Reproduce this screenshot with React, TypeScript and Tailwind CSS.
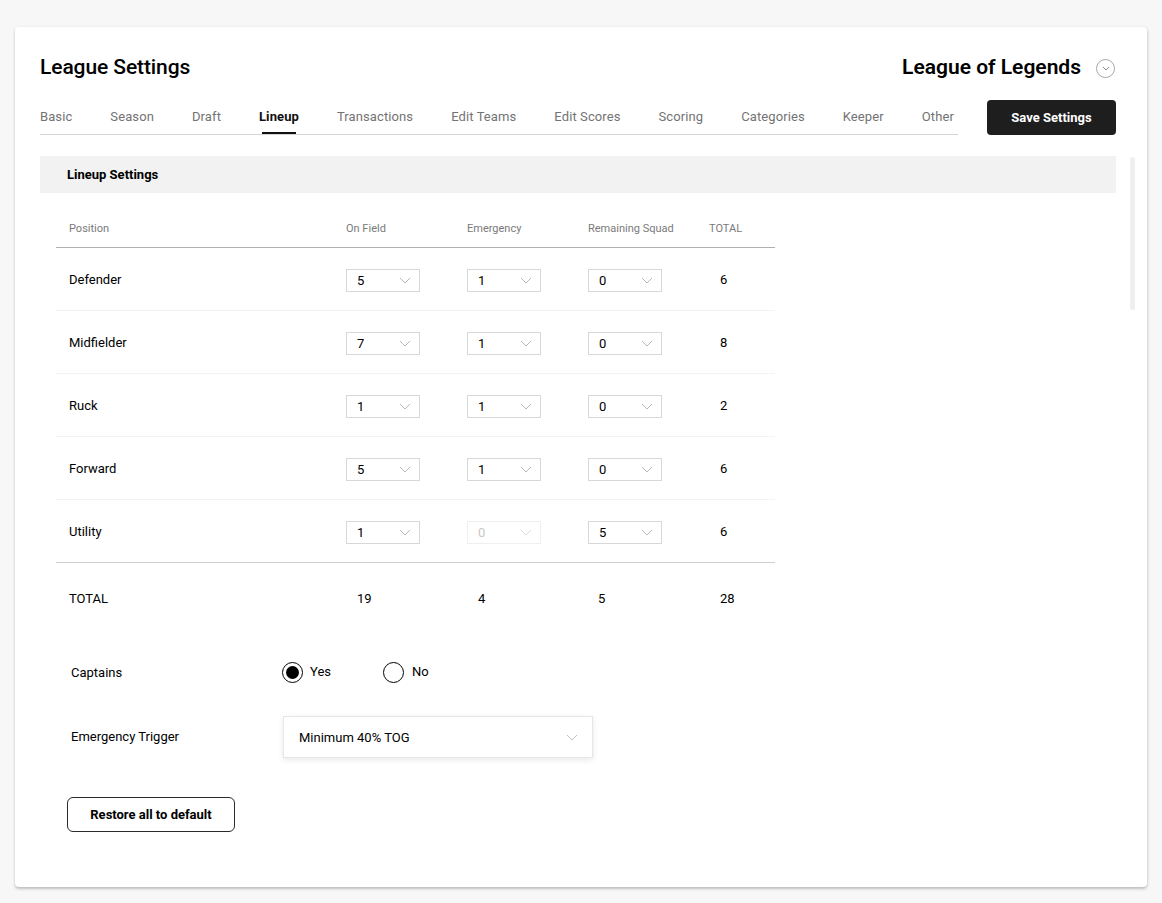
import React from "react";

const Chevron = ({ w = 12, h = 7, color = "#b5b5b5" }: { w?: number; h?: number; color?: string }) => (
  <svg width={w} height={h} viewBox="0 0 12 7" fill="none">
    <path d="M1 1l5 5 5-5" stroke={color} strokeWidth="1" />
  </svg>
);

const Select = ({ value, disabled = false }: { value: string; disabled?: boolean }) => (
  <div
    className={`w-[74px] h-[23px] flex items-center justify-between pl-[10px] pr-[8px] border ${
      disabled ? "border-[#efefef] text-[#c8c8c8]" : "border-[#d8d8d8] text-[#000]"
    }`}
  >
    <span className="text-[13px] leading-none">{value}</span>
    <Chevron color={disabled ? "#dedede" : "#b8b8b8"} />
  </div>
);

const tabs = [
  "Basic",
  "Season",
  "Draft",
  "Lineup",
  "Transactions",
  "Edit Teams",
  "Edit Scores",
  "Scoring",
  "Categories",
  "Keeper",
  "Other",
];

const rows = [
  { name: "Defender", f: "5", e: "1", r: "0", t: "6" },
  { name: "Midfielder", f: "7", e: "1", r: "0", t: "8" },
  { name: "Ruck", f: "1", e: "1", r: "0", t: "2" },
  { name: "Forward", f: "5", e: "1", r: "0", t: "6" },
  { name: "Utility", f: "1", e: "0", r: "5", t: "6", dis: true },
];

export default function App() {
  return (
    <div
      className="min-h-[903px] bg-[#f7f7f7] pt-[27px] pl-[15px] pr-[15px] pb-[16px]"
      style={{ fontFamily: "Roboto, 'Liberation Sans', sans-serif" }}
    >
      <div className="relative bg-white rounded-[4px] h-[860px] shadow-[0_2px_3px_rgba(0,0,0,0.22),1px_0_3px_rgba(0,0,0,0.06)] pt-[26px] pl-[25px] pr-[31px] text-[#000]">
        {/* faint scrollbar */}
        <div className="absolute right-[12px] top-[130px] w-[5px] h-[153px] bg-[#efefef] rounded-full" />
        <div className="flex items-center justify-between h-[30px]">
          <h1 className="text-[21px] font-medium tracking-[-0.1px]">League Settings</h1>
          <div className="flex items-center gap-[15px] pr-[1px]">
            <span className="text-[21px] font-semibold">League of Legends</span>
            <span className="w-[19px] h-[19px] rounded-full border border-[#a8a8a8] flex items-center justify-center">
              <svg width="8" height="5" viewBox="0 0 8 5" fill="none">
                <path d="M1 1l3 3 3-3" stroke="#8a8a8a" strokeWidth="1" />
              </svg>
            </span>
          </div>
        </div>

        <div className="flex items-end justify-between mt-[17px]">
          <div className="w-[918px] h-[35px] flex items-start gap-[38px] border-b border-[#d4d4d4] pt-[7px]">
            {tabs.map((t) => (
              <div key={t} className="relative h-[27px] flex items-start">
                <span
                  className={`text-[13px] leading-[20px] tracking-[0.1px] ${
                    t === "Lineup" ? "font-bold text-[#111]" : "text-[#737373]"
                  }`}
                >
                  {t}
                </span>
                {t === "Lineup" && (
                  <div className="absolute left-[3px] right-[3px] bottom-0 h-[2px] bg-[#111]" />
                )}
              </div>
            ))}
          </div>
          <button className="w-[129px] h-[35px] bg-[#1e1e1e] rounded-[4px] text-white text-[13px] font-bold">
            Save Settings
          </button>
        </div>

        <div className="mt-[21px] h-[37px] bg-[#f2f2f2] flex items-center pl-[27px] pt-[1px]">
          <span className="text-[13px] font-bold">Lineup Settings</span>
        </div>

        <div className="ml-[16px] w-[719px] mt-[15px]">
          <div className="grid grid-cols-[290px_121px_121px_121px_66px] h-[40px] items-end pb-[10px] border-b border-[#b0b0b0] text-[11px] text-[#7a7a7a]">
            <span className="pl-[13px]">Position</span>
            <span>On Field</span>
            <span>Emergency</span>
            <span>Remaining Squad</span>
            <span>TOTAL</span>
          </div>
          {rows.map((r, i) => (
            <div
              key={r.name}
              className={`grid grid-cols-[290px_121px_121px_121px_66px] h-[63px] items-center pt-[2px] border-b ${
                i === rows.length - 1 ? "border-[#cfcfcf]" : "border-[#f3f3f3]"
              }`}
            >
              <span className="pl-[13px] text-[13px]">{r.name}</span>
              <Select value={r.f} />
              <Select value={r.e} disabled={!!r.dis} />
              <Select value={r.r} />
              <span className="pl-[11px] text-[13px]">{r.t}</span>
            </div>
          ))}
          <div className="grid grid-cols-[290px_121px_121px_121px_66px] h-[66px] pt-[5px] items-center text-[13px]">
            <span className="pl-[13px]">TOTAL</span>
            <span className="pl-[11px]">19</span>
            <span className="pl-[11px]">4</span>
            <span className="pl-[10px]">5</span>
            <span className="pl-[11px]">28</span>
          </div>
        </div>

        <div className="pl-[31px]">
          <div className="flex items-center h-[20px] mt-[33px]">
            <span className="w-[211px] text-[13px] pt-[1px]">Captains</span>
            <div className="flex items-center">
              <span className="w-[21px] h-[21px] rounded-full border-[1.5px] border-black flex items-center justify-center">
                <span className="w-[13px] h-[13px] rounded-full bg-black" />
              </span>
              <span className="ml-[7px] text-[13px]">Yes</span>
              <span className="ml-[52px] w-[21px] h-[21px] rounded-full border-[1.5px] border-black" />
              <span className="ml-[8px] text-[13px]">No</span>
            </div>
          </div>

          <div className="flex items-center mt-[34px]">
            <span className="w-[212px] text-[13px]">Emergency Trigger</span>
            <div className="w-[310px] h-[42px] border border-[#e6e6e6] shadow-[0_2px_6px_rgba(0,0,0,0.09)] flex items-center justify-between pl-[15px] pr-[14px]">
              <span className="text-[13px] pt-[2px]">Minimum 40% TOG</span>
              <Chevron color="#c0c0c0" />
            </div>
          </div>

          <button className="mt-[39px] -ml-[4px] w-[168px] h-[35px] border-[1.5px] border-[#2a2a2a] rounded-[6px] text-[13px] font-bold">
            Restore all to default
          </button>
        </div>
      </div>
    </div>
  );
}
